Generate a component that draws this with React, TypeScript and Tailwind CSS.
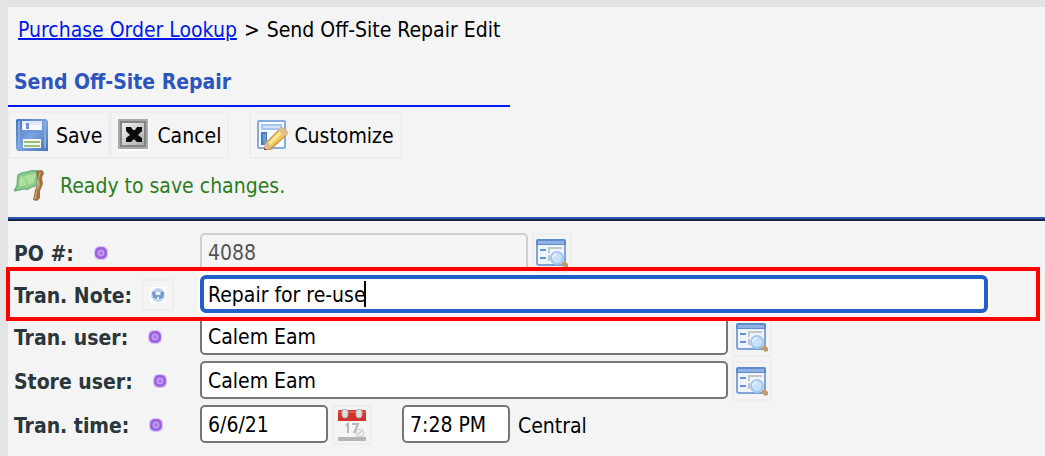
import React from 'react';

const fieldClass =
  'h-[38px] min-w-0 rounded-[5px] border-2 border-[#767676] bg-white px-[6px] pt-[2px] text-black outline-none';

const SaveIcon = () => (
  <svg width="32" height="32" viewBox="0 0 32 32" className="shrink-0">
    <defs>
      <linearGradient id="disk" x1="0" y1="0" x2="1" y2="1">
        <stop offset="0" stopColor="#3f72b4" />
        <stop offset="0.5" stopColor="#7ba3e0" />
        <stop offset="1" stopColor="#4673b9" />
      </linearGradient>
    </defs>
    <path d="M1 0h29l2 2v30H2l-2-2V1z" fill="url(#disk)" />
    <path d="M2 2h2v26l-2 1zM28 2h2v27h-2z" fill="#86aae0" />
    <path d="M6 2h20v9H6z" fill="#dfe9f7" />
    <path d="M7 6h18v5H7z" fill="#f7faff" />
    <path d="M5 12h22v2H5z" fill="#6f97d6" />
    <path d="M10 4h3v6h-3z" fill="#6d8fca" />
    <path d="M7 20h18v9H7z" fill="#f4f8ef" />
    <path d="M8 22h16v2H8zM8 26h16v2H8z" fill="#93c07a" />
  </svg>
);

const CancelIcon = () => (
  <svg width="31" height="32" viewBox="0 0 31 32" className="shrink-0">
    <defs>
      <linearGradient id="cancel" x1="0" y1="0" x2="1" y2="1">
        <stop offset="0" stopColor="#f3f3f3" />
        <stop offset="1" stopColor="#aaa" />
      </linearGradient>
    </defs>
    <path d="M0 0h31v32H0z" fill="#fff" />
    <path d="M0 0h30v30H0z" fill="#a9a9a9" />
    <path d="M2 2h26v26H2z" fill="#858585" />
    <path d="M4 4h22v22H4z" fill="url(#cancel)" />
    <path d="M8 8h5l2 3h2l2-3h5v4l-4 4 4 3v4h-5l-3-3-3 3H8v-4l4-3-4-4z" fill="#0a0a0a" />
  </svg>
);

const CustomizeIcon = () => (
  <svg width="31" height="32" viewBox="0 0 31 32" className="shrink-0">
    <rect x="1" y="2" width="27" height="27" rx="1" fill="#f4f9ff" stroke="#86abdd" strokeWidth="2" />
    <path d="M4 5h21v6H4z" fill="#a3c5ef" />
    <path d="M6 7h17v2H6z" fill="#d4e5fb" />
    <path d="M4 13h6v13H4z" fill="#497bc0" />
    <path d="M6 15h3v9H6z" fill="#719dd7" />
    <path d="M12 13h13v13H12z" fill="#fff" />
    <path d="M7 31l1-7L24 8l3 1 4 4-1 3-16 15z" fill="#cf9d50" />
    <path d="M10 24L23 11l5 5-14 12z" fill="#f3cd62" />
    <path d="M11 24L23 12l2 2-12 12z" fill="#ffe99a" />
    <path d="M24 8l3 1 4 4-1 3-3 1-6-6z" fill="#e2bd8e" />
    <path d="M8 24l3 1 3 4-7 2z" fill="#dfbb92" />
    <path d="M7 29l3 2H7z" fill="#5c4024" />
  </svg>
);

const FlagIcon = () => (
  <svg width="32" height="32" viewBox="0 0 32 32" className="shrink-0">
    <path
      d="M4 5c3-2 5-2 9-3s7-2 11-1l-2 15c-4 0-5 1-8 3-2 1-2-1-5 0l-9 2 3-5z"
      fill="#8ecb8a"
      stroke="#6db184"
      strokeWidth="1.5"
    />
    <path d="M6 7c5-2 8-1 16-4l-2 10c-5 1-8 3-15 3z" fill="#b0e09c" />
    <path d="M9 7q5 3 4 10" fill="none" stroke="#94d08a" strokeWidth="2" />
    <path d="M22 1l6-1 2 3-2 5 1 6-3 7v7l-3 3-4-1 2-10 3-7z" fill="#9d733f" />
    <path d="M25 3l2-1-2 7 1 6-3 6-1 8h-2l3-12z" fill="#cda36b" />
  </svg>
);

const LookupIcon = () => (
  <svg width="32" height="32" viewBox="0 0 32 32" className="shrink-0">
    <rect x="1" y="3" width="28" height="25" rx="2" fill="#eef4fb" stroke="#7fa3d8" strokeWidth="2" />
    <path d="M0 4q0-2 2-2h26q2 0 2 2v4H0z" fill="#5f8cd0" />
    <path d="M2 4h26v3H2z" fill="#8fb1e4" />
    <path d="M4 12h6v2H4zM4 20h6v2H4z" fill="#6490dc" />
    <path d="M12 10h14v2H14v4h-2zM12 18h2v6h-2z" fill="#c3c6c8" />
    <path d="M25 27l3-3 4 3v3l-3 1z" fill="#c19a6c" />
    <circle cx="21" cy="21" r="6" fill="#c9e0fa" stroke="#a3c5ee" strokeWidth="2" />
    <path d="M17 21a4 4 0 0 1 4-4" fill="none" stroke="#e5f2ff" strokeWidth="2" />
  </svg>
);

const CalendarIcon = () => (
  <svg width="32" height="32" viewBox="0 0 32 32" className="shrink-0">
    <rect x="2" y="1" width="28" height="31" rx="1" fill="#b5b5b5" />
    <path d="M2 11h28v17H2z" fill="#f5f5f5" />
    <path d="M2 2q0-1 1-1h26q1 0 1 1v10H2z" fill="#d3312a" />
    <path d="M2 2h28v2H2z" fill="#de5448" />
    <rect x="6" y="0" width="6" height="9" rx="3" fill="#dedede" stroke="#aaa" />
    <rect x="20" y="0" width="6" height="9" rx="3" fill="#dedede" stroke="#aaa" />
    <path d="M10 17l2-2v9M16 15h6l-4 9" fill="none" stroke="#b8b8b8" strokeWidth="2" />
    <circle cx="24" cy="24" r="4" fill="#eee" stroke="#d0d0d0" />
    <path d="M22 25l4-3" stroke="#b5b5b5" />
  </svg>
);

const HelpIcon = () => (
  <svg width="16" height="16" viewBox="0 0 16 16" className="shrink-0">
    <path d="M0 0h16v16H0z" fill="#fff" />
    <circle cx="8" cy="8" r="7" fill="#c4d8ee" />
    <path d="M2 5q2-1 3 0l1 6H3zM11 5q2-1 3 0l-1 6h-3z" fill="#7399c6" />
    <path d="M5 3q3-2 6 0v3H5z" fill="#b3cbe6" />
    <path d="M6 5h4v3H6z" fill="#f4f9ff" />
    <path d="M5 8h6v4H5z" fill="#7a9fca" />
    <path d="M7 10h2v2H7z" fill="#e4eef8" />
  </svg>
);

const RequiredDot = () => (
  <svg width="14" height="14" viewBox="0 0 14 14" className="ml-5 shrink-0">
    <rect x="0" y="0" width="14" height="14" rx="5" fill="#dcc8f3" />
    <rect x="1" y="1" width="12" height="12" rx="5" fill="#9d62e3" />
    <circle cx="7" cy="7" r="3" fill="#b287ec" stroke="#cbacf3" />
    <circle cx="7" cy="7" r="1" fill="#a473e4" />
  </svg>
);

const ToolButton: React.FC<{ label: string; className: string; children: React.ReactNode }> = ({
  label,
  className,
  children,
}) => (
  <button type="button" className={`flex h-12 items-center border-2 border-[#eeeeee] ${className}`}>
    {children}
    <span className="pt-[2px]">{label}</span>
  </button>
);

const IconButton: React.FC<{ label: string; children: React.ReactNode }> = ({ label, children }) => (
  <button
    type="button"
    aria-label={label}
    className="ml-1 flex size-10 shrink-0 items-center justify-center border-2 border-[#eeeeee]"
  >
    {children}
  </button>
);

const FieldLabel: React.FC<{ id: string; text: string; children: React.ReactNode }> = ({ id, text, children }) => (
  <div className="flex h-10 w-[186px] shrink-0 items-center font-bold text-[#2b363b]">
    <label htmlFor={id} className="pt-[2px]">
      {text}
    </label>
    {children}
  </div>
);

const App: React.FC = () => {
  return (
    <div className="min-h-screen border-l-8 border-t-[7px] border-[#e4e4e4] bg-[#f4f4f4] font-['DejaVu_Sans_Condensed','DejaVu_Sans',sans-serif] text-[21px] leading-7 text-black">
      {/* Breadcrumb */}
      <nav className="flex h-[45px] items-center gap-[7px] px-[10px]">
        <a href="#" className="text-[#0019e8] underline decoration-2">
          Purchase Order Lookup
        </a>
        <span>&gt;</span>
        <span>Send Off-Site Repair Edit</span>
      </nav>

      <h1 className="flex h-[55px] w-[502px] max-w-full items-center border-b-2 border-[#0019f5] px-[6px] pt-[6px] font-bold text-[#2c56bd]">
        Send Off-Site Repair
      </h1>

      {/* Toolbar */}
      <div className="mt-1 flex">
        <ToolButton label="Save" className="gap-2 px-[6px]">
          <SaveIcon />
        </ToolButton>
        <ToolButton label="Cancel" className="gap-2 px-[6px]">
          <CancelIcon />
        </ToolButton>
        <ToolButton label="Customize" className="ml-5 gap-[6px] px-[6px]">
          <CustomizeIcon />
        </ToolButton>
      </div>

      <p className="flex h-[58px] items-center gap-[14px] px-[6px] pb-1 text-[#2b7d1d]">
        <FlagIcon />
        Ready to save changes.
      </p>
      <div className="h-1 border-t-2 border-[#2b58ae] bg-[#14244f]" />

      <form className="pl-[6px] pt-3">
        <div className="flex h-[42px]">
          <FieldLabel id="po" text="PO #:">
            <RequiredDot />
          </FieldLabel>
          <input
            id="po"
            defaultValue="4088"
            readOnly
            className="h-[38px] w-[328px] min-w-0 rounded-[5px] border-2 border-[#cfcfcf] bg-transparent px-[6px] pt-[2px] text-[#545454] outline-none"
          />
          <IconButton label="Look up purchase order">
            <LookupIcon />
          </IconButton>
        </div>

        <div className="relative z-10 flex h-[42px]">
          <FieldLabel id="note" text="Tran. Note:">
            <button
              type="button"
              aria-label="Note help"
              className="ml-[10px] flex size-8 shrink-0 items-center justify-center border-2 border-[#eeeeee]"
            >
              <HelpIcon />
            </button>
          </FieldLabel>
          <div className="relative mr-[57px] min-w-0 grow">
            <input
              id="note"
              defaultValue="Repair for re-use"
              className="h-[38px] w-full rounded-[6px] border-4 border-[#2160c8] bg-white px-1 pt-[2px] text-black ring-2 ring-white outline-none"
            />
            {/* text caret */}
            <span className="absolute left-[164px] top-[6px] h-[26px] w-[2px] bg-black" />
          </div>
          <div className="pointer-events-none absolute -left-2 right-[5px] -top-2 h-[54px] border-4 border-[#ff0000]" />
        </div>

        <div className="flex h-11">
          <FieldLabel id="tran-user" text="Tran. user:">
            <RequiredDot />
          </FieldLabel>
          <input id="tran-user" defaultValue="Calem Eam" className={`w-[528px] ${fieldClass}`} />
          <IconButton label="Look up tran. user">
            <LookupIcon />
          </IconButton>
        </div>

        <div className="flex h-11">
          <FieldLabel id="store-user" text="Store user:">
            <RequiredDot />
          </FieldLabel>
          <input id="store-user" defaultValue="Calem Eam" className={`w-[528px] ${fieldClass}`} />
          <IconButton label="Look up store user">
            <LookupIcon />
          </IconButton>
        </div>

        <div className="flex h-11">
          <FieldLabel id="tran-date" text="Tran. time:">
            <RequiredDot />
          </FieldLabel>
          <input id="tran-date" defaultValue="6/6/21" className={`w-32 ${fieldClass}`} />
          <IconButton label="Pick a date">
            <CalendarIcon />
          </IconButton>
          <input
            id="tran-time"
            aria-label="Time"
            defaultValue="7:28 PM"
            className={`ml-[30px] w-[108px] ${fieldClass}`}
          />
          <label htmlFor="tran-time" className="ml-2 flex h-10 items-center pt-[2px]">
            Central
          </label>
        </div>
      </form>
    </div>
  );
};

export default App;
